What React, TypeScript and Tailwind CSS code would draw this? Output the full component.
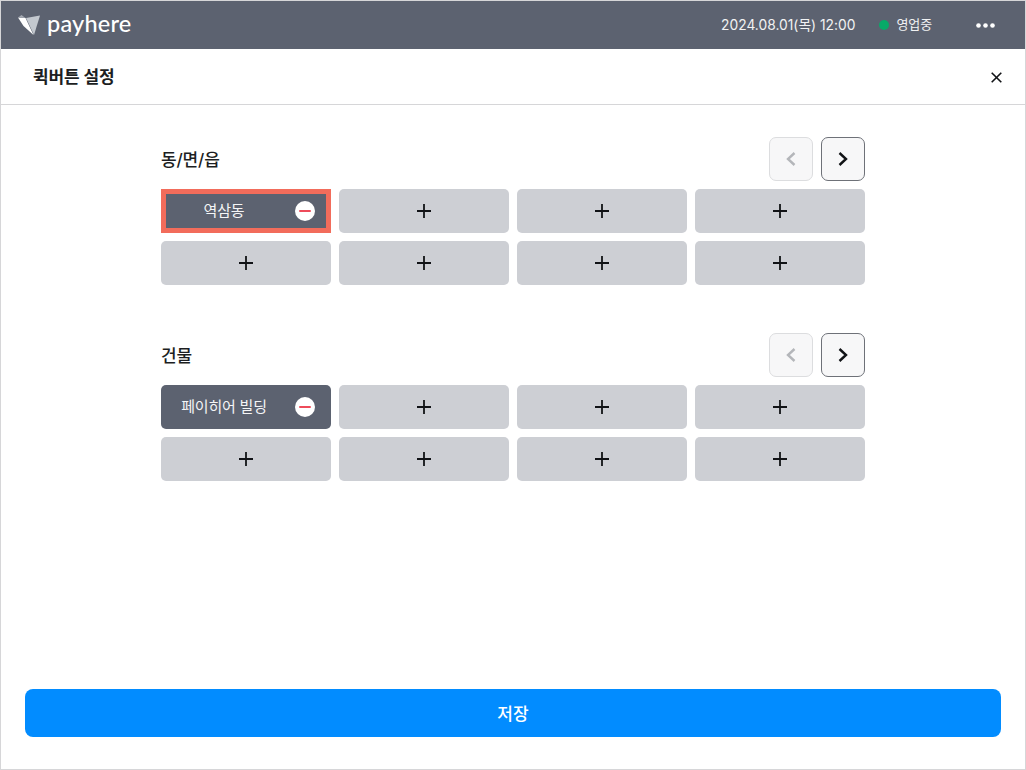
import React from "react";

const font = { fontFamily: '"Inter", "Noto Sans CJK KR", sans-serif' };

function Plus() {
  return (
    <svg width="14" height="14" viewBox="0 0 14 14" fill="none" stroke="#111316" strokeWidth="1.8">
      <path d="M7 0v14M0 7h14" />
    </svg>
  );
}

function Minus({ selected }: { selected?: boolean }) {
  return (
    <span
      className={
        "absolute top-1/2 -translate-y-1/2 flex h-[20px] w-[20px] items-center justify-center rounded-full bg-white " +
        (selected ? "right-[11px]" : "right-[16px]")
      }
    >
      <span className="h-[2.5px] w-[12px] rounded-full bg-[#ee4b5a]" />
    </span>
  );
}

function Filled({ label, selected }: { label: string; selected?: boolean }) {
  return (
    <button
      className={
        "relative flex h-[44px] items-center bg-[#5c6270] text-[15px] text-[#f4f5f6] " +
        (selected ? "rounded-none border-[5px] border-[#f26c5b]" : "rounded-[5px]")
      }
    >
      <span className={"text-center tracking-[-0.2px] " + (selected ? "w-[116px]" : "w-[126px]")}>{label}</span>
      <Minus selected={selected} />
    </button>
  );
}

function Empty() {
  return (
    <button className="flex h-[44px] items-center justify-center rounded-[5px] bg-[#cdcfd4]">
      <Plus />
    </button>
  );
}

function Section({ title, label, selected }: { title: string; label: string; selected?: boolean }) {
  return (
    <section>
      <div className="mb-[8px] flex h-[44px] items-center justify-between">
        <h2 className="pt-[2px] text-[17px] font-medium leading-none text-[#1c1e22] tracking-[-0.15px]">{title}</h2>
        <div className="flex gap-[8px]">
          <button className="flex h-[44px] w-[44px] items-center justify-center rounded-[7px] border border-[#dcdddf] bg-[#f7f7f8]">
            <svg width="12" height="16" viewBox="0 0 12 16" fill="none" stroke="#b4b6ba" strokeWidth="2.4">
              <path d="M9.5 2 3 8l6.5 6" />
            </svg>
          </button>
          <button className="flex h-[44px] w-[44px] items-center justify-center rounded-[7px] border border-[#6e7178] bg-[#f7f7f8]">
            <svg width="12" height="16" viewBox="0 0 12 16" fill="none" stroke="#111316" strokeWidth="2.4">
              <path d="M2.5 2 9 8l-6.5 6" />
            </svg>
          </button>
        </div>
      </div>
      <div className="grid grid-cols-[170px_170px_170px_170px] gap-[8px]">
        <Filled label={label} selected={selected} />
        {Array.from({ length: 7 }).map((_, i) => (
          <Empty key={i} />
        ))}
      </div>
    </section>
  );
}

export default function App() {
  return (
    <div style={font} className="flex h-[770px] w-[1026px] flex-col border border-[#d6d6d8] bg-white">
      <header className="flex h-[48px] shrink-0 items-center bg-[#5c6270] pl-[16px] pr-[30px] text-white">
        <svg width="24" height="22" viewBox="0 0 24 22" className="mr-[6px]">
          <path d="M1 3.5 8.5 4 16.5 21 6.5 12Z" fill="#ffffff" />
          <path d="M9 4 23 1.5 17 21Z" fill="#c3c8cf" />
          <path d="M1 3.5 4.5 1 8.5 4Z" fill="#a4a9b2" />
        </svg>
        <span className="pb-[2px] text-[23.5px] font-medium leading-none tracking-[0.2px]" style={{ fontFamily: '"Lato", sans-serif' }}>payhere</span>
        <span className="ml-auto text-[13.8px] text-[#f1f2f3]">2024.08.01(목) 12:00</span>
        <span className="ml-[24px] h-[10px] w-[10px] rounded-full bg-[#08a968]" />
        <span className="ml-[7px] text-[13px] tracking-[-0.1px] text-[#f1f2f3]">영업중</span>
        <svg width="19" height="5" viewBox="0 0 19 5" className="ml-[44px]" fill="#fff">
          <circle cx="2.5" cy="2.5" r="2.3" />
          <circle cx="9.5" cy="2.5" r="2.3" />
          <circle cx="16.5" cy="2.5" r="2.3" />
        </svg>
      </header>
      <div className="flex h-[56px] shrink-0 items-center justify-between border-b border-[#d6d6d8] pl-[32px] pr-[23px]">
        <h1 className="pt-[3px] text-[17px] font-semibold text-[#1c1e22] tracking-[-0.15px]">퀵버튼 설정</h1>
        <svg width="11" height="11" viewBox="0 0 11 11" fill="none" stroke="#111316" strokeWidth="1.6" className="mt-[1px]">
          <path d="M.7.7l9.6 9.6M10.3.7.7 10.3" />
        </svg>
      </div>
      <main className="flex flex-1 flex-col px-[24px] pb-[32px] pt-[32px]">
        <div className="mx-auto flex w-[704px] flex-col gap-[48px]">
          <Section title="동/면/읍" label="역삼동" selected />
          <Section title="건물" label="페이히어 빌딩" />
        </div>
        <button className="mt-auto h-[48px] w-full rounded-[8px] bg-[#028cff] pt-[3px] text-[17px] font-medium text-white">저장</button>
      </main>
    </div>
  );
}
